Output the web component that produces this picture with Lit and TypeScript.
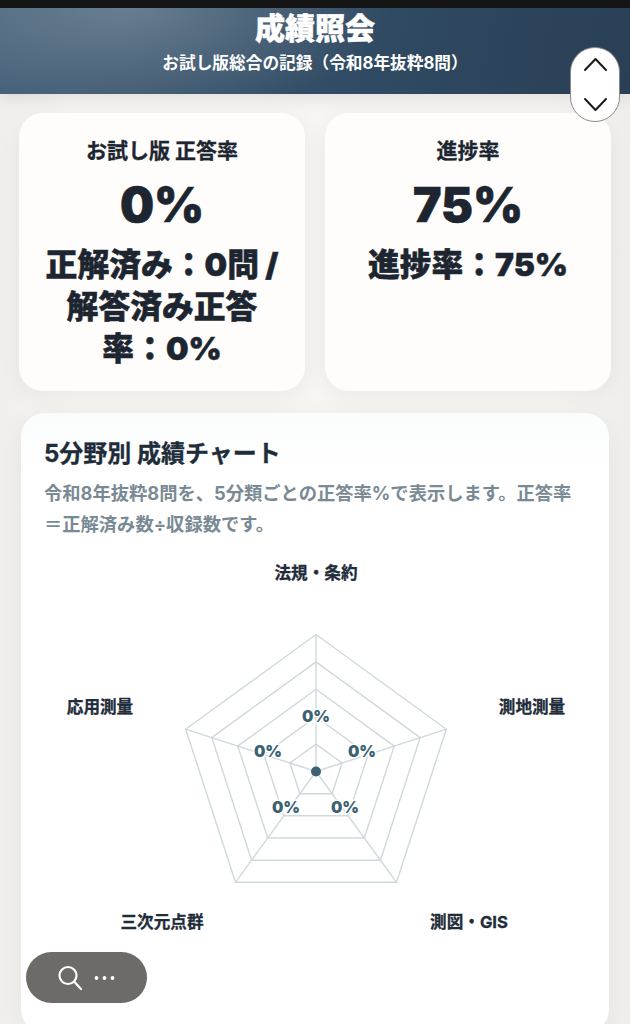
import { LitElement, html, css, svg } from "lit";
import { customElement } from "lit/decorators.js";

const CX = 316;
const CY = 771.5;
const R = 137;
const pt = (i: number, r: number) => {
  const a = (-90 + i * 72) * (Math.PI / 180);
  return [CX + r * Math.cos(a), CY + r * Math.sin(a)];
};
const ring = (r: number) =>
  [0, 1, 2, 3, 4].map((i) => pt(i, r).map((n) => n.toFixed(1)).join(",")).join(" ");

const axisLabels: [string, number, number][] = [
  ["法規・条約", 316, 573],
  ["測地測量", 532, 707],
  ["測図・GIS", 469, 922],
  ["三次元点群", 162, 922],
  ["応用測量", 100, 707],
];
const valueLabels: [number, number][] = [
  [316, 716],
  [362, 751],
  [345, 807],
  [286, 807],
  [268, 751],
];

@customElement("app-root")
export class AppRoot extends LitElement {
  static styles = css`
    :host {
      display: block;
      position: relative;
      width: 630px;
      height: 1024px;
      overflow: hidden;
      background: linear-gradient(90deg, #f1efeb 0%, #f7f6f3 12%, #f7f6f3 88%, #efeeeb 100%);
      font-family: Inter, "Noto Sans CJK JP", sans-serif;
      color: #1d2630;
    }
    .status {
      height: 8px;
      background: #161616;
    }
    .header {
      height: 86px;
      box-sizing: border-box;
      padding-top: 1px;
      text-align: center;
      color: #fff;
      background:
        radial-gradient(ellipse 260px 110px at 130px 0px, rgba(255, 255, 255, 0.22), rgba(255, 255, 255, 0) 100%),
        linear-gradient(100deg, #456078 0%, #2f4a62 60%, #2a3f55 100%);
      box-shadow: 0 4px 18px rgba(0, 0, 0, 0.1);
    }
    .header h1 {
      margin: 0;
      font-size: 30px;
      line-height: 38px;
      font-weight: 900;
      -webkit-text-stroke: 0.5px currentColor;
    }
    .header p {
      margin: 5px 0 0;
      font-size: 16.7px;
      line-height: 22px;
      font-weight: 700;
    }
    .stats {
      display: grid;
      grid-template-columns: 286px 286px;
      gap: 20px;
      padding: 19px 19px 0;
    }
    .stat {
      height: 278px;
      box-sizing: border-box;
      padding-top: 25px;
      border-radius: 24px;
      background: #fefdfb;
      box-shadow: 0 6px 24px rgba(40, 40, 40, 0.06);
      text-align: center;
    }
    .stat h2 {
      margin: 0;
      font-size: 21px;
      line-height: 26px;
      font-weight: 700;
      -webkit-text-stroke: 0.3px currentColor;
    }
    .big {
      margin-top: 11px;
      font-size: 48px;
      line-height: 60px;
      font-weight: 900;
      -webkit-text-stroke: 0.6px currentColor;
    }
    .detail {
      margin: 9px auto 0;
      width: 240px;
      font-size: 31.8px;
      line-height: 42px;
      font-weight: 900;
      -webkit-text-stroke: 0.5px currentColor;
    }
    .chart {
      margin: 22px 21px 0;
      height: 620px;
      box-sizing: border-box;
      padding: 25px 23px 0;
      border-radius: 24px;
      background: linear-gradient(180deg, #fbfcfc 0%, #ffffff 60px);
      box-shadow: 0 6px 24px rgba(40, 40, 40, 0.07);
    }
    .chart h2 {
      margin: 0;
      font-size: 24px;
      line-height: 32px;
      font-weight: 700;
      color: #1f2d3a;
      -webkit-text-stroke: 0.3px currentColor;
    }
    .chart p {
      margin: 8px 0 0;
      width: 540px;
      font-size: 18.3px;
      line-height: 31px;
      font-weight: 700;
      color: #7a8a94;
    }
    .radar {
      position: absolute;
      left: 0;
      top: 0;
      width: 630px;
      height: 1024px;
    }
    .axis-label {
      font-size: 16.6px;
      font-weight: 700;
      fill: #1f2d3a;
      stroke: #1f2d3a;
      stroke-width: 0.3px;
      text-anchor: middle;
      dominant-baseline: central;
    }
    .halo {
      font-size: 16px;
      font-weight: 900;
      fill: #fff;
      stroke: #fff;
      stroke-width: 3px;
      text-anchor: middle;
      dominant-baseline: central;
    }
    .value-label {
      font-size: 16px;
      font-weight: 900;
      fill: #3b6273;
      text-anchor: middle;
      dominant-baseline: central;
    }
    .pager {
      position: absolute;
      left: 570px;
      top: 47px;
      width: 50px;
      height: 75px;
      box-sizing: border-box;
      border-radius: 25px;
      background: #fff;
      border: 1px solid #8a8a8a;
    }
    .pager svg {
      position: absolute;
      left: 0;
      top: 0;
    }
    .search {
      position: absolute;
      left: 26px;
      top: 952px;
      width: 121px;
      height: 51px;
      box-sizing: border-box;
      padding-right: 2px;
      border-radius: 26px;
      background: #6d6b68;
      display: flex;
      align-items: center;
      justify-content: center;
      gap: 11px;
    }
  `;

  render() {
    return html`
      <div class="status"></div>
      <header class="header">
        <h1>成績照会</h1>
        <p>お試し版総合の記録（令和8年抜粋8問）</p>
      </header>
      <section class="stats">
        <div class="stat">
          <h2>お試し版 正答率</h2>
          <div class="big">0%</div>
          <div class="detail">正解済み：0問 / 解答済み正答率：0%</div>
        </div>
        <div class="stat">
          <h2>進捗率</h2>
          <div class="big">75%</div>
          <div class="detail">進捗率：75%</div>
        </div>
      </section>
      <section class="chart">
        <h2>5分野別 成績チャート</h2>
        <p>令和8年抜粋8問を、5分類ごとの正答率%で表示します。正答率＝正解済み数÷収録数です。</p>
      </section>
      <svg class="radar" viewBox="0 0 630 1024">
        ${[1, 2, 3, 4, 5].map(
          (k) => svg`<polygon points=${ring((R * k) / 5)} fill="none" stroke="#cfd9dc" stroke-width="1.4"></polygon>`
        )}
        ${[0, 1, 2, 3, 4].map((i) => {
          const [x, y] = pt(i, R);
          return svg`<line x1=${CX} y1=${CY} x2=${x} y2=${y} stroke="#cfd9dc" stroke-width="1.4"></line>`;
        })}
        <circle cx=${CX} cy=${CY} r="5" fill="#3b6273"></circle>
        ${valueLabels.map(([x, y]) => svg`<text class="halo" x=${x} y=${y}>0%</text><text class="value-label" x=${x} y=${y}>0%</text>`)}
        ${axisLabels.map(([t, x, y]) => svg`<text class="axis-label" x=${x} y=${y}>${t}</text>`)}
      </svg>
      <div class="pager">
        <svg width="48" height="73" viewBox="0 0 48 73" fill="none" stroke="#1a1a1a" stroke-width="2" stroke-linecap="round" stroke-linejoin="round">
          <path d="M14 22 L24.5 11 L35 22"></path>
          <path d="M14 51 L24.5 62 L35 51"></path>
        </svg>
      </div>
      <div class="search">
        <svg width="26" height="28" viewBox="0 0 26 28" fill="none" stroke="#fff" stroke-width="2.2" stroke-linecap="round">
          <circle cx="11" cy="11.5" r="8.5"></circle>
          <path d="M17.5 18 L24 25"></path>
        </svg>
        <svg width="21" height="6" viewBox="0 0 21 6" fill="#fff">
          <circle cx="2.5" cy="3" r="1.9"></circle>
          <circle cx="10.5" cy="3" r="1.9"></circle>
          <circle cx="18.5" cy="3" r="1.9"></circle>
        </svg>
      </div>
    `;
  }
}
